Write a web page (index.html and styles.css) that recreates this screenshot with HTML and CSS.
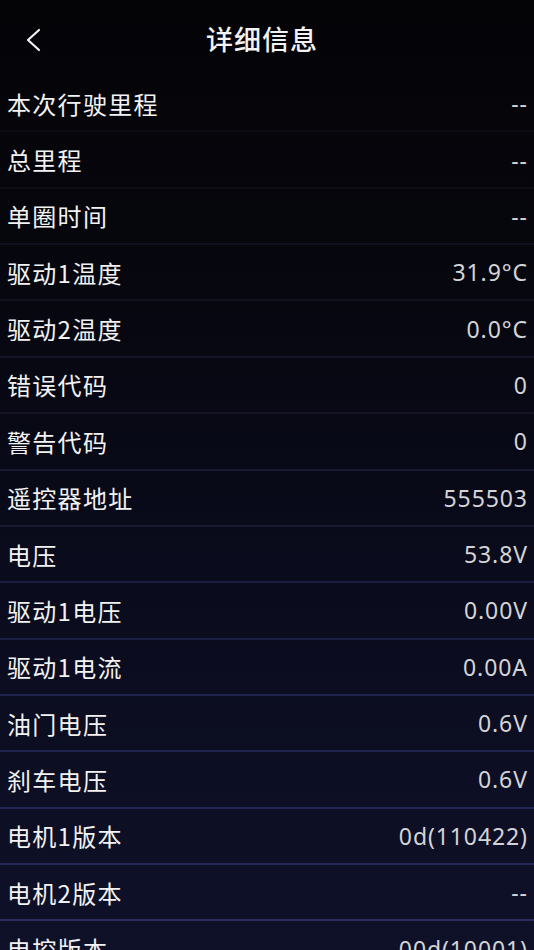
FILE: index.html
```html
<!DOCTYPE html>
<html lang="zh">
<head>
<meta charset="utf-8">
<title>详细信息</title>
<link rel="stylesheet" href="styles.css">
</head>
<body>
<div class="page">
  <header class="header">
    <span class="back">
      <svg width="18" height="24" viewBox="0 0 18 24"><path d="M15 2 L4 12 L15 22" fill="none" stroke="#f2f2f2" stroke-width="2.2" stroke-linecap="round" stroke-linejoin="round"/></svg>
    </span>
    <h1 class="title">详细信息</h1>
  </header>
  <ul class="list">
    <li class="row"><span class="label">本次行驶里程</span><span class="value">--</span></li>
    <li class="row"><span class="label">总里程</span><span class="value">--</span></li>
    <li class="row"><span class="label">单圈时间</span><span class="value">--</span></li>
    <li class="row"><span class="label">驱动1温度</span><span class="value">31.9°C</span></li>
    <li class="row"><span class="label">驱动2温度</span><span class="value">0.0°C</span></li>
    <li class="row"><span class="label">错误代码</span><span class="value">0</span></li>
    <li class="row"><span class="label">警告代码</span><span class="value">0</span></li>
    <li class="row"><span class="label">遥控器地址</span><span class="value">555503</span></li>
    <li class="row"><span class="label">电压</span><span class="value">53.8V</span></li>
    <li class="row"><span class="label">驱动1电压</span><span class="value">0.00V</span></li>
    <li class="row"><span class="label">驱动1电流</span><span class="value">0.00A</span></li>
    <li class="row"><span class="label">油门电压</span><span class="value">0.6V</span></li>
    <li class="row"><span class="label">刹车电压</span><span class="value">0.6V</span></li>
    <li class="row"><span class="label">电机1版本</span><span class="value">0d(110422)</span></li>
    <li class="row"><span class="label">电机2版本</span><span class="value">--</span></li>
    <li class="row"><span class="label">电控版本</span><span class="value">00d(10001)</span></li>
  </ul>
</div>
</body>
</html>
```

FILE: styles.css
```css
html, body {
  margin: 0;
  padding: 0;
  height: 100%;
  overflow: hidden;
}
body {
  background: #040407;
  font-family: "Noto Sans", "Noto Sans CJK SC", sans-serif;
}
.page {
  width: 534px;
  height: 950px;
  overflow: hidden;
  background: linear-gradient(180deg, #040407 0%, #06060d 25%, #0a0b1c 60%, #0f1129 100%);
}
.header {
  height: 76px;
  display: flex;
  align-items: center;
  justify-content: center;
  position: relative;
}
.back {
  position: absolute;
  left: 24px;
  top: 28px;
  display: flex;
}
.title {
  margin: 0 10px 0 0;
  font-family: "Noto Sans CJK SC", sans-serif;
  font-size: 27px;
  font-weight: 500;
  color: #f2f2f2;
  letter-spacing: 1px;
}
.list {
  list-style: none;
  margin: 0;
  padding: 0;
}
.row {
  height: 56.36px;
  box-sizing: border-box;
  display: flex;
  align-items: center;
  justify-content: space-between;
  padding: 0 7px 0 7px;
  border-bottom: 2px solid #0d0d16;
}
.label {
  font-family: "Noto Sans CJK SC", sans-serif;
  font-size: 24px;
  letter-spacing: 1.3px;
  color: #f2f2f2;
}
.value {
  font-family: "Noto Sans", sans-serif;
  font-size: 23px;
  letter-spacing: 0.9px;
  margin-right: -0.9px;
  color: #d4d4d7;
}
.row:nth-child(3), .row:nth-child(4) { border-bottom-color: #10111d; }
.row:nth-child(5), .row:nth-child(6) { border-bottom-color: #131527; }
.row:nth-child(7), .row:nth-child(8) { border-bottom-color: #171a33; }
.row:nth-child(9), .row:nth-child(10) { border-bottom-color: #1b1e41; }
.row:nth-child(11), .row:nth-child(12) { border-bottom-color: #1f234c; }
.row:nth-child(13), .row:nth-child(14) { border-bottom-color: #232755; }
.row:nth-child(n+15) { border-bottom-color: #272b5e; }
```
